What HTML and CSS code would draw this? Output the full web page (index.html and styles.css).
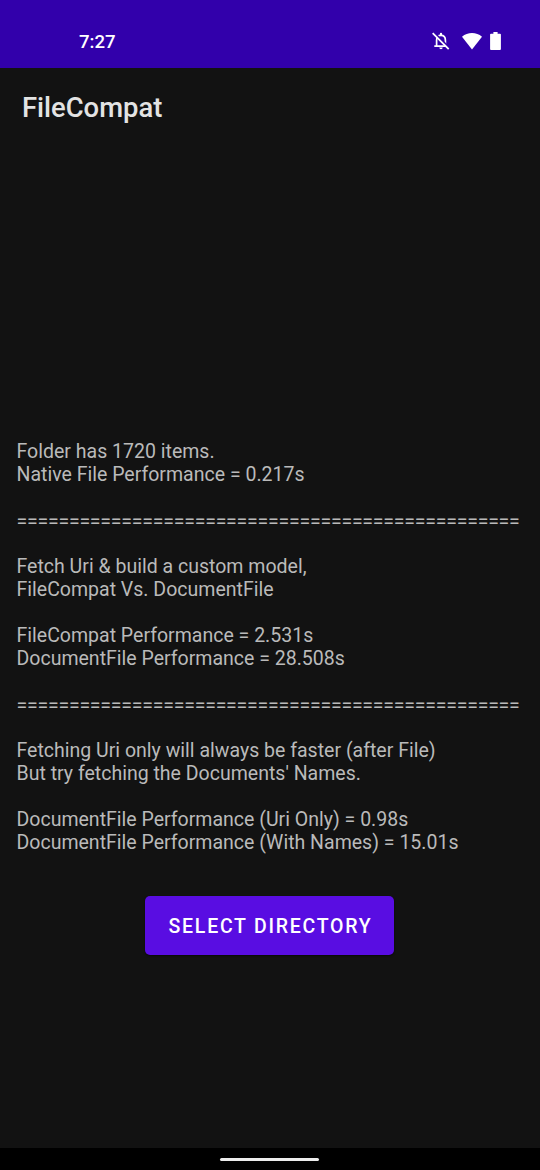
FILE: index.html
```html
<!DOCTYPE html>
<html lang="en">
<head>
<meta charset="utf-8">
<title>FileCompat</title>
<link rel="stylesheet" href="styles.css">
</head>
<body>
<header class="status-bar">
<span class="clock">7:27</span>
<div class="status-icons">
<svg class="bell" viewBox="0 0 20 20" width="20" height="20"><path d="M5.6 15V9.2C5.6 5.7 7.3 4.3 10 4.3s4.4 1.4 4.4 4.9V15M3.3 15.2h13.4" fill="none" stroke="#fff" stroke-width="1.7"/><path d="M8.9 4V2.8a1.1 1.1 0 0 1 2.2 0V4zM8.3 16.6h3.4a1.7 1.7 0 0 1-3.4 0z" fill="#fff"/><path d="M3 1.4l16 16" stroke="#3200ab" stroke-width="1.8"/><path d="M1.7 2.2l16 16" stroke="#fff" stroke-width="1.8"/></svg>
<svg class="wifi" viewBox="0 0 20 17" width="20" height="17"><path d="M0 3.7C5.6-1.1 14.4-1.1 20 3.7L10 16.5z" fill="#fff"/></svg>
<svg class="battery" viewBox="0 0 11 18" width="11" height="18"><path d="M3.4 0h4.2v1.7H10a.9.9 0 0 1 .9.9v14.5a.9.9 0 0 1-.9.9H1a.9.9 0 0 1-.9-.9V2.6a.9.9 0 0 1 .9-.9h2.4z" fill="#fff"/></svg>
</div>
</header>
<h1 class="app-title">FileCompat</h1>
<main class="content">
<div class="report">
<p>Folder has 1720 items.</p>
<p>Native File Performance = 0.217s</p>
<p class="rule">================================================</p>
<p>Fetch Uri &amp; build a custom model,</p>
<p>FileCompat Vs. DocumentFile</p>
<p class="gap">FileCompat Performance = 2.531s</p>
<p>DocumentFile Performance = 28.508s</p>
<p class="rule">================================================</p>
<p>Fetching Uri only will always be faster (after File)</p>
<p>But try fetching the Documents' Names.</p>
<p class="gap">DocumentFile Performance (Uri Only) = 0.98s</p>
<p>DocumentFile Performance (With Names) = 15.01s</p>
</div>
<button class="select-button">SELECT DIRECTORY</button>
</main>
<footer class="nav-bar"><div class="nav-handle"></div></footer>
</body>
</html>
```
FILE: styles.css
```css
* { box-sizing: border-box; }
body {
  display: flex;
  flex-direction: column;
  height: 1170px;
  margin: 0;
  overflow: hidden;
  background: #121212;
  color: #bababa;
  font-family: Roboto, sans-serif;
}
.status-bar {
  display: flex;
  justify-content: space-between;
  align-items: center;
  height: 68px;
  padding: 14px 39px 0 79px;
  background: #3200ab;
  color: #fff;
}
.clock { padding-top: 1px; font-size: 18.6px; font-weight: 500; line-height: 24px; }
.status-icons { display: flex; align-items: center; }
.bell { margin-right: 11px; }
.wifi { margin-right: 8px; }
.app-title {
  height: 80px;
  margin: 0;
  padding-left: 22px;
  color: #e3e3e3;
  font-size: 27.4px;
  font-weight: 500;
  line-height: 80px;
}
.content {
  display: flex;
  flex: 1;
  flex-direction: column;
  align-items: center;
  padding: 292px 1px 0 0;
}
.report {
  align-self: stretch;
  padding-left: 16.5px;
  font-size: 19.53px;
  line-height: 23px;
  white-space: nowrap;
}
.report p { margin: 0; }
.report .rule { margin: 24px 0 22px; letter-spacing: -0.23px; }
.report .gap { margin-top: 23px; }
.select-button {
  width: 249px;
  height: 59px;
  margin-top: 42px;
  padding: 3px 0 0 2px;
  border: 0;
  border-radius: 5px;
  background: #590de2;
  box-shadow: 0 1px 2px #0008;
  color: #fff;
  font: 500 19.5px/24px Roboto, sans-serif;
  letter-spacing: 1.75px;
}
.nav-bar {
  display: flex;
  justify-content: center;
  height: 22px;
  padding: 10px 1px 0 0;
  background: #000;
}
.nav-handle { width: 99px; height: 3px; border-radius: 2px; background: #ececec; }
```
